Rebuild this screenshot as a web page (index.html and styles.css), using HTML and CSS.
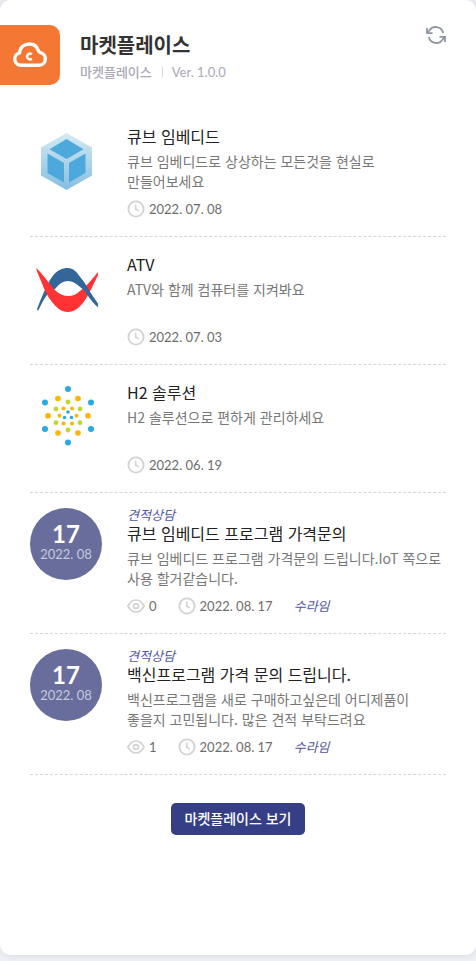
FILE: index.html
```html
<!DOCTYPE html>
<html lang="ko">
<head>
<meta charset="utf-8">
<meta name="viewport" content="width=device-width, initial-scale=1">
<title>마켓플레이스</title>
<link rel="stylesheet" href="styles.css">
</head>
<body>
<svg class="defs" aria-hidden="true">
  <symbol id="clock" viewBox="0 0 18 18"><circle cx="9" cy="9" r="7.6" fill="none" stroke="currentColor" stroke-width="1.8"/><path d="M8.7 4.5v4.8l3.1 1.6" fill="none" stroke="currentColor" stroke-width="1.6"/></symbol>
  <symbol id="eye" viewBox="0 0 18 18"><path d="M.9 9C3 5.100 5.700 3 9 3s6 2.100 8.100 6c-2.100 3.900-4.800 6-8.100 6S3 12.900.9 9z" fill="none" stroke="currentColor" stroke-width="1.700" stroke-linejoin="round"/><circle cx="9" cy="9" r="2.400" fill="none" stroke="currentColor" stroke-width="1.700"/></symbol>
</svg>
<main class="card">
  <header class="head">
    <div class="app-icon">
      <svg width="36" height="26" viewBox="0 0 36 26" aria-hidden="true"><path d="M9 23.300a6.300 6.300 0 0 1-1.500-12.400C8.300 4.800 12.700 2 17.300 2c4.400 0 7.600 2.400 8.900 6.200.5 1.500.8 2 2.300 2.500A6.400 6.400 0 0 1 27.200 23.300z" fill="none" stroke="#fff" stroke-width="3.400"/><path d="M19.800 12.400a2.800 2.800 0 1 0 0 4.200" fill="none" stroke="#fff" stroke-width="2.400"/></svg>
    </div>
    <div class="head-text">
      <h1>마켓플레이스</h1>
      <p class="sub"><span>마켓플레이스</span><span class="version">Ver. 1.0.0</span></p>
    </div>
    <button class="refresh" type="button" aria-label="새로고침">
      <svg width="20" height="18" viewBox="0 0 20 18" fill="none" stroke="currentColor" stroke-width="1.800"><path d="M1 2v5.200h5.500M1.200 7l2-2.200A7.600 7.600 0 0 1 17.200 7M19 16v-5.200h-5.500M18.800 11l-2 2.200A7.600 7.600 0 0 1 2.800 11"/></svg>
    </button>
  </header>

  <ul class="list">
    <li class="item">
      <div class="thumb">
        <svg width="72" height="72" viewBox="0 0 72 72" aria-hidden="true"><defs><linearGradient id="hex" x1="0" y1="0" x2="0" y2="1"><stop offset="0" stop-color="#d5eaf4"/><stop offset="1" stop-color="#84bfe0"/></linearGradient></defs><path d="M36.500 9 62 23.500v28L36.500 66 11 51.500v-28z" fill="url(#hex)"/><path d="M36.500 15 53.500 25.300 36.500 35 19.500 25.300zM17.500 29.500 34 39v19.500L17.500 49zM55.500 29.500 39 39v19.500L55.500 49z" fill="#4da9dc"/></svg>
      </div>
      <div class="body">
        <h2>큐브 임베디드</h2>
        <p class="desc">큐브 임베디드로 상상하는 모든것을 현실로 만들어보세요</p>
        <div class="meta"><span class="stat"><svg><use href="#clock"/></svg><time>2022. 07. 08</time></span></div>
      </div>
    </li>
    <li class="item">
      <div class="thumb">
        <svg width="72" height="72" viewBox="0 0 72 72" aria-hidden="true"><g transform="translate(0 1)"><path d="M7 56C12 43 17 31 22 24C27 17 32 15 38 15C43 15 47 19 50 24C54 29 56 32 58 36L68 51V54C60 47 56 37 50 34C46 30 42 28 38 28C33 28 29 31 26 35L17 42C13 47 11 52 8 58z" fill="#336699"/><path d="M6 15C9 17 15 25 20 31C24 37 30 43 38 43C43 43 47 41 50 38C58 32 63 25 68 19V22C64 30 59 42 53 50C48 56 43 59 38 59C31 59 26 54 22 49C17 43 14 36 11 28C9 23 7 19 6 15z" fill="#ff3333"/><path d="M49 23C54 28 57 34 60 39L68 51V54C61 49 57 40 50 33z" fill="#336699"/></g></svg>
      </div>
      <div class="body">
        <h2>ATV</h2>
        <p class="desc">ATV와 함께 컴퓨터를 지켜봐요</p>
        <div class="meta"><span class="stat"><svg><use href="#clock"/></svg><time>2022. 07. 03</time></span></div>
      </div>
    </li>
    <li class="item">
      <div class="thumb">
        <svg width="72" height="72" viewBox="0 0 72 72" aria-hidden="true"><g transform="translate(0 1)">
          <g fill="#29abe2"><circle cx="38" cy="8" r="3"/><circle cx="15" cy="21.500" r="3"/><circle cx="61" cy="21.500" r="3"/><circle cx="15" cy="48" r="3"/><circle cx="61" cy="48" r="3"/><circle cx="38" cy="61.500" r="3"/><circle cx="38" cy="31" r="1.800"/><circle cx="34.500" cy="36.500" r="1.800"/><circle cx="41.500" cy="36.500" r="1.800"/></g>
          <g fill="#ffb400"><circle cx="28" cy="17.500" r="2.800"/><circle cx="48" cy="17.500" r="2.800"/><circle cx="18" cy="34.700" r="2.800"/><circle cx="58" cy="34.700" r="2.800"/><circle cx="28" cy="52" r="2.800"/><circle cx="48" cy="52" r="2.800"/><circle cx="33.500" cy="27.500" r="2"/><circle cx="42" cy="27.500" r="2"/><circle cx="29.500" cy="34.700" r="2"/><circle cx="46.500" cy="34.700" r="2"/><circle cx="33.500" cy="42.500" r="2"/><circle cx="42" cy="42.500" r="2"/></g>
          <g fill="#bfd730"><circle cx="38" cy="21" r="2.400"/><circle cx="26" cy="28" r="2.400"/><circle cx="50" cy="28" r="2.400"/><circle cx="26" cy="41.700" r="2.400"/><circle cx="50" cy="41.700" r="2.400"/><circle cx="38" cy="49" r="2.400"/></g>
        </g></svg>
      </div>
      <div class="body">
        <h2>H2 솔루션</h2>
        <p class="desc">H2 솔루션으로 편하게 관리하세요</p>
        <div class="meta"><span class="stat"><svg><use href="#clock"/></svg><time>2022. 06. 19</time></span></div>
      </div>
    </li>
    <li class="item">
      <div class="thumb day"><strong>17</strong><span>2022. 08</span></div>
      <div class="body">
        <em class="category">견적상담</em>
        <h2>큐브 임베디드 프로그램 가격문의</h2>
        <p class="desc">큐브 임베디드 프로그램 가격문의 드립니다.IoT 쪽으로 사용 할거같습니다.</p>
        <div class="meta"><span class="stat"><svg><use href="#eye"/></svg>0</span><span class="stat"><svg><use href="#clock"/></svg><time>2022. 08. 17</time></span><em class="author">수라임</em></div>
      </div>
    </li>
    <li class="item">
      <div class="thumb day"><strong>17</strong><span>2022. 08</span></div>
      <div class="body">
        <em class="category">견적상담</em>
        <h2>백신프로그램 가격 문의 드립니다.</h2>
        <p class="desc">백신프로그램을 새로 구매하고싶은데 어디제품이 좋을지 고민됩니다. 많은 견적 부탁드려요</p>
        <div class="meta"><span class="stat"><svg><use href="#eye"/></svg>1</span><span class="stat"><svg><use href="#clock"/></svg><time>2022. 08. 17</time></span><em class="author">수라임</em></div>
      </div>
    </li>
  </ul>
  <button class="more" type="button">마켓플레이스 보기</button>
</main>
</body>
</html>
```

FILE: styles.css
```css
* { box-sizing: border-box; }
body {
  margin: 0;
  min-height: 100vh;
  padding-bottom: 6px;
  display: flex;
  background: #f0f0f7;
  color: #222;
  font-family: "Noto Sans CJK KR", sans-serif;
}
h1, h2, p, ul { margin: 0; padding: 0; }
.defs { position: absolute; width: 0; height: 0; }
.card {
  flex: 1;
  display: flex;
  flex-direction: column;
  padding: 25px 30px;
  background: #fff;
  border-radius: 10px;
  box-shadow: 0 0 10px rgba(0, 0, 0, .12);
}
.head {
  display: flex;
  gap: 20px;
  margin: 0 0 24px -30px;
}
.app-icon {
  width: 60px;
  height: 60px;
  display: flex;
  align-items: center;
  justify-content: center;
  border-radius: 0 10px 10px 0;
  background: #f47733;
}
.head-text { flex: 1; padding-top: 5px; }
h1 {
  font-size: 20px;
  line-height: 30px;
  font-weight: 600;
  color: #333;
}
.sub {
  display: flex;
  align-items: center;
  font-size: 13px;
  line-height: 24px;
  font-weight: 500;
  color: #a8a8b6;
}
.version {
  margin-left: 10px;
  padding-left: 9px;
  border-left: 1px solid #dcdce4;
  font-family: Lato, sans-serif;
  font-weight: 400;
  line-height: 10px;
}
.refresh {
  align-self: flex-start;
  height: 20px;
  padding: 0;
  border: 0;
  background: none;
  color: #9096a3;
}
.refresh svg { display: block; }
.list { list-style: none; }
.item {
  display: flex;
  gap: 25px;
  padding: 15px 0;
  border-bottom: 1px dashed #d5d5da;
}
.thumb { flex: none; width: 72px; height: 72px; }
.thumb svg { display: block; }
.day {
  display: flex;
  flex-direction: column;
  align-items: center;
  padding-top: 10px;
  border-radius: 50%;
  background: #686d9c;
  color: #fff;
  font-family: Lato, sans-serif;
}
.day strong { font-size: 24px; line-height: 32px; font-weight: 700; }
.day span { font-size: 13px; line-height: 16px; font-weight: 400; margin-top: -4px; color: #c6c8dc; }
.body { flex: 1; min-width: 0; }
h2 { font-size: 16px; line-height: 24px; font-weight: 400; }
.desc {
  min-height: 40px;
  margin: 3px 0 6px;
  font-size: 14px;
  line-height: 20px;
  color: #777;
  word-break: keep-all;
}
.category, .author { font-size: 13px; color: #4d56a0; }
.category { display: block; line-height: 13px; }
.meta {
  display: flex;
  align-items: center;
  gap: 21px;
  height: 24px;
  color: #6c6c6c;
  font-family: Lato, "Noto Sans CJK KR", sans-serif;
  font-size: 13px;
  line-height: 18px;
}
.stat { display: flex; align-items: center; gap: 4px; }
.stat svg { width: 18px; height: 18px; color: #d2d2d2; }
.more {
  align-self: center;
  height: 32px;
  margin-top: 28px;
  padding: 0 14px 2px;
  border: 0;
  border-radius: 5px;
  background: #363f85;
  color: #fff;
  font-family: inherit;
  font-size: 14px;
  font-weight: 500;
}
```
